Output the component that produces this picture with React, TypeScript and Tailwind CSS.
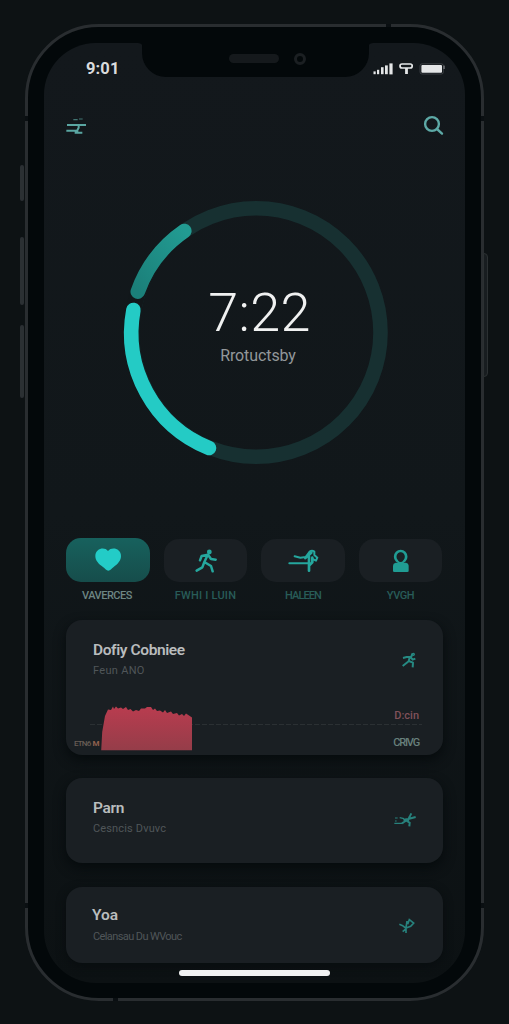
import type { ReactNode } from "react";

function FrameMarks() {
  return (
    <>
      <span className="absolute -left-[8px] top-[138px] h-9 w-1 rounded-sm bg-[#2b3033]" />
      <span className="absolute -left-[8px] top-[210px] h-[68px] w-1 rounded-sm bg-[#2b3033]" />
      <span className="absolute -left-[8px] top-[298px] h-[73px] w-1 rounded-sm bg-[#2b3033]" />
      <span className="absolute -right-[7px] top-[226px] h-[124px] w-[5px] rounded-r-sm border border-[#2b3032] bg-[#181d20]" />
      <span className="absolute -left-[3px] top-[89px] h-[5px] w-[3px] bg-[#0a0f12]" />
      <span className="absolute -right-[3px] top-[89px] h-[5px] w-[3px] bg-[#0a0f12]" />
      <span className="absolute -left-[3px] top-[876px] h-[5px] w-[3px] bg-[#0a0f12]" />
      <span className="absolute -right-[3px] top-[876px] h-[5px] w-[3px] bg-[#0a0f12]" />
      <span className="absolute -top-[3px] left-[358px] h-[3px] w-[5px] bg-[#0a0f12]" />
      <span className="absolute -bottom-[3px] left-[85px] h-[3px] w-[5px] bg-[#0a0f12]" />
    </>
  );
}

function Notch() {
  return (
    <div className="absolute left-[98px] top-0 flex h-[34px] w-[227px] items-start rounded-b-[24px] bg-[#03080a] pl-[87px] pt-[11px]">
      <svg className="absolute -left-1 top-0 h-1.5 w-[235px]" viewBox="0 0 235 6" fill="#03080a">
        <path d="M0 0h5v6q0-6-5-6zM235 0h-5v6q0-6 5-6z" />
      </svg>
      <span className="h-[9px] w-[50px] rounded-full bg-[#15191c]" />
      <span className="ml-[15px] -mt-px size-3 rounded-full border-[3px] border-[#1b1f22]" />
    </div>
  );
}

function StatusBar() {
  return (
    <div className="flex h-[52px] items-center justify-between pl-[42px] pr-[19px]">
      <span className="font-['Roboto',sans-serif] text-[16.5px] font-bold leading-none tracking-[0.1px] text-[#d9dbdc]">9:01</span>
      <svg className="h-3 w-[73px]" viewBox="0 0 73 12">
        <g fill="#e4e6e7">
          <rect x="0.5" y="8.4" width="2.2" height="2.8" />
          <rect x="4" y="6.8" width="2.2" height="4.4" />
          <rect x="8" y="4.2" width="2.6" height="7" />
          <rect x="12" y="2.4" width="2.8" height="8.8" />
          <rect x="16.4" y="0.4" width="3.2" height="11" />
          <rect x="48.4" y="2" width="20.6" height="7.8" rx="1" />
          <rect x="70.5" y="2.6" width="1.2" height="3.4" opacity="0.5" />
        </g>
        <g fill="none" stroke="#e4e6e7">
          <rect x="27" y="1" width="12.2" height="4" rx="2" strokeWidth="1.7" />
          <path d="M33.5 5v6" strokeWidth="2.8" />
          <rect x="47" y="0.8" width="23.4" height="10.2" rx="2" strokeWidth="0.6" opacity="0.3" />
        </g>
      </svg>
    </div>
  );
}

function Header() {
  return (
    <div className="flex h-[61px] items-center justify-between pl-[22px] pr-[21px]">
      <svg className="h-[17px] w-[21px]" viewBox="199 350 63 51" fill="none" stroke="#5aa6a2" strokeWidth="6">
        <path d="M221 358h13M238 356h11" strokeWidth="3.5" opacity="0.65" />
        <path d="M202 374h57M200 391h31M225 397h23M237 374v8l-4 8v8" />
      </svg>
      <svg className="size-[21px]" viewBox="0 0 21 21" fill="none" stroke="#5da9a6" strokeWidth="2.4">
        <circle cx="9" cy="9" r="6.9" />
        <path d="M14 14l5 4.6" strokeLinecap="round" />
      </svg>
    </div>
  );
}

function Dial() {
  return (
    <div className="mt-[45px] grid h-[264px] justify-center pl-[3px]">
      <svg className="col-start-1 row-start-1 size-[264px] overflow-visible" viewBox="124 201 264 264" fill="none" strokeLinecap="round">
        <defs>
          <linearGradient id="dim" x1="0" y1="1" x2="1" y2="0">
            <stop offset="0" stopColor="#1b7f79" />
            <stop offset="1" stopColor="#229b92" />
          </linearGradient>
        </defs>
        <circle cx="256.2" cy="332.5" r="124.3" stroke="#173031" strokeWidth="14.6" />
        <path d="M209 448A124.3 124.3 0 0 1 184.3 231" stroke="#11171a" strokeWidth="15.5" strokeLinecap="butt" />
        <path d="M137.8 291.6A124.3 124.3 0 0 1 184.3 231" stroke="url(#dim)" strokeWidth="14.6" />
        <path d="M133.4 310A124.3 124.3 0 0 0 209 448" stroke="#24cbc5" strokeWidth="14.6" />
      </svg>
      <div className="col-start-1 row-start-1 flex flex-col items-center pt-[83px]">
        <span className="pl-[7px] font-['Roboto',sans-serif] text-[54px] font-light leading-[58px] tracking-[0.3px] text-[#f0f1f1]">7:22</span>
        <span className="mt-[4px] pl-[4px] font-['Roboto',sans-serif] text-[16px] leading-5 tracking-[-0.1px] text-[#93979a]">Rrotuctsby</span>
      </div>
    </div>
  );
}

function Tab({ label, active, labelClass, children }: { label: string; active?: boolean; labelClass: string; children: ReactNode }) {
  return (
    <div className="flex flex-col items-center">
      <div className={active ? "grid h-11 w-full place-items-center rounded-[15px] bg-linear-to-b from-[#17615d] to-[#164d4b]" : "mt-px grid h-[43px] w-full place-items-center rounded-[15px] bg-[#1a1f23]"}>
        {children}
      </div>
      <span className={`mt-[5px] whitespace-nowrap font-['Roboto',sans-serif] text-[11px] font-medium leading-[18px] ${labelClass}`}>{label}</span>
    </div>
  );
}

function Tabs() {
  return (
    <div className="mt-[73px] grid h-[67px] grid-cols-[84px_83px_84px_83px] justify-between pl-[22px] pr-[23px]">
      <Tab label="VAVERCES" active labelClass="text-[#6d8583] tracking-[-0.5px] -ml-[2px]">
        <svg className="h-6 w-[27px]" viewBox="136 72 81 72" fill="#23ccc7">
          <path d="M176 140c-6 0-9-6-16-11-13-9-23-19-23-33 0-23 28-29 38-15 11-14 39-8 39 15 0 14-10 24-22 33-7 5-10 11-16 11z" />
        </svg>
      </Tab>
      <Tab label="FWHI I LUIN" labelClass="text-[#285c58] tracking-[0.2px]">
        <svg className="h-6 w-[22px]" viewBox="436 70 66 72" fill="none" stroke="#25a79e" strokeWidth="7.5" strokeLinecap="round" strokeLinejoin="round">
          <circle cx="479" cy="79" r="3.5" />
          <path d="M451 104l5-13 19-4 9 13 14 2M473 90l-9 19 20 12 5 16M464 109l-6 16-17 10" />
        </svg>
      </Tab>
      <Tab label="HALEEN" labelClass="text-[#285c58] tracking-[-0.9px]">
        <svg className="h-6 w-[31px]" viewBox="116 73 93 72" fill="none" stroke="#25a79e" strokeWidth="6" strokeLinecap="round" strokeLinejoin="round">
          <path d="M120 116h55M136 95l17 4 16-2 12-16q7-5 14 0v10l9 8-4 9-11-5" />
          <path d="M168 100l18-16M179 96v42M180 122l9-9v-14" strokeWidth="8" />
        </svg>
      </Tab>
      <Tab label="YVGH" labelClass="text-[#285c58] tracking-[-0.4px]">
        <svg className="h-6 w-[18px]" viewBox="424 70 54 72">
          <ellipse cx="450" cy="93" rx="16.5" ry="17" fill="none" stroke="#209c93" strokeWidth="8" />
          <path d="M427 120q0-7 8-9h31q8 2 8 9v16q0 3-4 3h-39q-4 0-4-3z" fill="#209c93" />
          <ellipse cx="450" cy="95" rx="9.5" ry="14" fill="#1a2225" />
        </svg>
      </Tab>
    </div>
  );
}

function CardHead({ title, sub, titleClass, subClass, children }: { title: string; sub: string; titleClass: string; subClass: string; children: ReactNode }) {
  return (
    <div className="flex justify-between pl-[27px] pr-[26px] font-['Roboto',sans-serif]">
      <div className="flex flex-col">
        <span className={`text-[15.5px] font-semibold leading-5 text-[#b9bcbd] ${titleClass}`}>{title}</span>
        <span className={`mt-[3px] text-[11px] leading-4 text-[#505659] ${subClass}`}>{sub}</span>
      </div>
      {children}
    </div>
  );
}

const AREA = "M46.2 140.3L47.2 122L50 106 53 99.5 56 100 58 96.5 59 99 61 96.5 63 98.5 66 97.5 68 99 71 97 73 100 75.5 99 78 101.5 81 100 84 101 86 98.5 90 98.5 92 97 96 97 98 100 100 98.5 102 101 105 100.5 108 102.5 110 100 112 103 116 101.5 118 104 122 103 124 105.5 127 104 129 106 131 103.5 134 105.5 137 107.5V140.3Z";

function CaloriesCard() {
  return (
    <div className="h-[135px] rounded-[16px] bg-[#1a1f23] pt-5 shadow-[0_5px_12px_#060b0d]">
      <CardHead title="Dofiy Cobniee" sub="Feun ANO" titleClass="tracking-[-0.4px]" subClass="tracking-[0.3px]">
        <svg className="mt-[12px] h-4 w-[15px]" viewBox="440 125 45 48" fill="none" stroke="#268a83" strokeWidth="6" strokeLinejoin="round">
          <path d="M443 143l11-3 14-1 3-9M463 141l-3 12-18 14M460 152l13 5-1 14M466 141l6 7 8-3" />
          <circle cx="474" cy="132" r="2" />
        </svg>
      </CardHead>
      <div className="mt-[13px] grid h-[63px]">
        <svg className="col-start-1 row-start-1 h-[63px] w-[377px]" viewBox="11 82 377 63">
          <defs>
            <linearGradient id="area" x1="0" y1="0" x2="0" y2="1">
              <stop offset="0" stopColor="#b93c4f" />
              <stop offset="1" stopColor="#953d49" />
            </linearGradient>
          </defs>
          <path d="M35 114.5H367" stroke="#2b3033" strokeDasharray="5 2" />
          <path d={AREA} fill="url(#area)" />
        </svg>
        <div className="col-start-1 row-start-1 flex items-end justify-between pb-[4px] pl-2 pr-6 font-['Roboto',sans-serif] leading-4">
          <span className="mb-[-1px] flex gap-[2px] text-[8px] font-medium leading-4 tracking-[-0.8px] text-[#685d55]">
            <span>ETN6</span>
            <b className="text-[#91604e]">M</b>
          </span>
          <div className="flex flex-col items-end gap-[11px] text-[11px] font-medium leading-4">
            <span className="text-[#80515a]">D:cin</span>
            <span className="tracking-[-1.2px] text-[#68807c]">CRIVG</span>
          </div>
        </div>
      </div>
    </div>
  );
}

export default function App() {
  return (
    <div className="h-[1024px] w-[509px] overflow-hidden bg-[#0d1214] pl-[25px] pt-6">
      <div className="relative h-[977px] w-[459px] rounded-[74px] border-[3px] border-[#292d30] bg-[#03080a] px-[16px] pt-[16px]">
        <FrameMarks />
        <div className="relative flex h-[940px] w-[421px] flex-col overflow-hidden rounded-[52px] bg-linear-to-b from-[#13181c] via-[#11171a] to-[#0c1113]">
          <Notch />
          <StatusBar />
          <Header />
          <Dial />
          <Tabs />
          <div className="mt-[15px] flex flex-col pl-[22px] pr-[22px]">
            <CaloriesCard />
            <div className="mt-[23px] h-[85px] rounded-[16px] bg-[#1a1f23] pt-5 shadow-[0_5px_12px_#060b0d]">
              <CardHead title="Parn" sub="Cesncis Dvuvc" titleClass="tracking-[-0.3px]" subClass="tracking-[0.15px]">
                <svg className="mt-[14px] h-[15px] w-[23px]" viewBox="414 127 69 45" fill="none" stroke="#27817c" strokeWidth="6">
                  <path d="M439 161h-24M417 145h8M431 144l13 3M417 154h5" strokeWidth="3.5" />
                  <path d="M438 161l6-4 13-8 9-18M442 150l15-2 22-6M451 153l10 6-1 11M460 142l-4 11" />
                </svg>
              </CardHead>
            </div>
            <div className="mt-6 h-[76px] rounded-[16px] bg-[#1a1f23] pt-[18px] shadow-[0_3px_10px_#080d0f]">
              <CardHead title="Yoa" sub="Celansau Du WVouc" titleClass="-ml-px" subClass="mt-[4px] tracking-[-0.6px]">
                <svg className="mt-[13px] mr-[2px] h-4 w-4" viewBox="431 444 48 48" fill="none" stroke="#27817c" strokeWidth="5">
                  <path d="M432 463l10 4 10 8v14M450 475l16-6 9-10-13-10-5 14M455 453l-3 20M442 485l8-7" />
                </svg>
              </CardHead>
            </div>
          </div>
          <div className="ml-[135px] mt-[7px] h-[6px] w-[151px] shrink-0 rounded-full bg-[#f1f2f2]" />
        </div>
      </div>
    </div>
  );
}
